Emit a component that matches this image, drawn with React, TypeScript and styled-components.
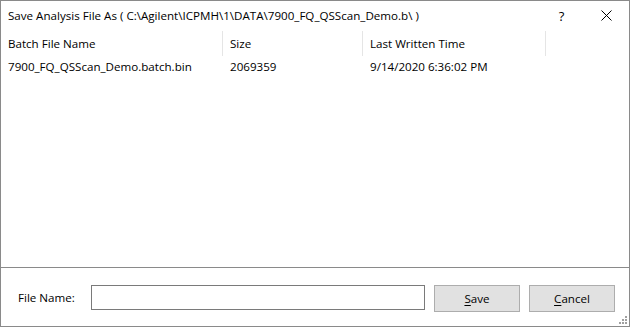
import React from "react";
import styled, { createGlobalStyle } from "styled-components";

const Global = createGlobalStyle`
  html, body { margin: 0; padding: 0; background: #ffffff; }
  * { box-sizing: border-box; }
`;

const Window = styled.div`
  width: 630px;
  height: 327px;
  border: 1px solid #8a8a8a;
  background: #ffffff;
  display: flex;
  flex-direction: column;
  font-family: "Open Sans", "Noto Sans", sans-serif;
  font-size: 11.6px;
  color: #000;
  position: relative;
`;

const TitleBar = styled.div`
  height: 29px;
  display: flex;
  align-items: center;
  padding-left: 7px;
`;

const Title = styled.div`
  flex: 1;
  white-space: nowrap;
`;

const TitleButton = styled.div`
  width: 45px;
  height: 29px;
  display: flex;
  align-items: center;
  justify-content: center;
  font-size: 13px;
`;

const List = styled.div`
  flex: 1;
  border-bottom: 1px solid #8a8a8a;
  display: flex;
  flex-direction: column;
`;

const Header = styled.div`
  height: 27px;
  display: flex;
  align-items: center;
`;

const HeaderCell = styled.div<{ $w: number }>`
  width: ${(p) => p.$w}px;
  height: 25px;
  display: flex;
  align-items: center;
  padding-left: 7px;
  border-right: 1px solid #e5e5e5;
  white-space: nowrap;
`;

const Row = styled.div`
  height: 18px;
  display: flex;
  align-items: center;
`;

const Cell = styled.div<{ $w: number }>`
  width: ${(p) => p.$w}px;
  padding-left: 7px;
  white-space: nowrap;
`;

const Footer = styled.div`
  height: 58px;
  display: flex;
  align-items: center;
  padding: 0 14px 0 17px;
`;

const Label = styled.div`
  width: 73px;
`;

const Input = styled.input`
  width: 334px;
  height: 25px;
  border: 1px solid #7a7a7a;
  outline: none;
  margin: 0 9px 0 0;
  padding: 0 4px;
  font: inherit;
`;

const Button = styled.button<{ $last?: boolean }>`
  width: 86px;
  height: 27px;
  margin: 2px ${(p) => (p.$last ? 0 : 9)}px 0 0;
  background: #e1e1e1;
  border: 1px solid #adadad;
  font: inherit;
  color: #000;
  padding: 0;
  u { text-decoration: underline; text-underline-offset: 2px; }
`;

const Grip = styled.svg`
  position: absolute;
  right: 1px;
  bottom: 1px;
`;

const cols = [
  { w: 222, head: "Batch File Name", val: "7900_FQ_QSScan_Demo.batch.bin" },
  { w: 140, head: "Size", val: "2069359" },
  { w: 183, head: "Last Written Time", val: "9/14/2020 6:36:02 PM" },
];

export default function App() {
  return (
    <>
      <Global />
      <Window>
        <TitleBar>
          <Title>Save Analysis File As ( C:\Agilent\ICPMH\1\DATA\7900_FQ_QSScan_Demo.b\ )</Title>
          <TitleButton>?</TitleButton>
          <TitleButton>
            <svg width="11" height="11" viewBox="0 0 11 11">
              <path d="M0.5 0.5 L10.5 10.5 M10.5 0.5 L0.5 10.5" stroke="#000" strokeWidth="1" />
            </svg>
          </TitleButton>
        </TitleBar>
        <List>
          <Header>
            {cols.map((c) => (
              <HeaderCell key={c.head} $w={c.w}>{c.head}</HeaderCell>
            ))}
          </Header>
          <Row>
            {cols.map((c) => (
              <Cell key={c.head} $w={c.w}>{c.val}</Cell>
            ))}
          </Row>
        </List>
        <Footer>
          <Label>File Name:</Label>
          <Input />
          <Button><u>S</u>ave</Button>
          <Button $last><u>C</u>ancel</Button>
        </Footer>
        <Grip width="10" height="10" viewBox="0 0 10 10">
          <g fill="#a0a0a0">
            <rect x="7" y="1" width="2" height="2" />
            <rect x="4" y="4" width="2" height="2" />
            <rect x="7" y="4" width="2" height="2" />
            <rect x="1" y="7" width="2" height="2" />
            <rect x="4" y="7" width="2" height="2" />
            <rect x="7" y="7" width="2" height="2" />
          </g>
        </Grip>
      </Window>
    </>
  );
}
